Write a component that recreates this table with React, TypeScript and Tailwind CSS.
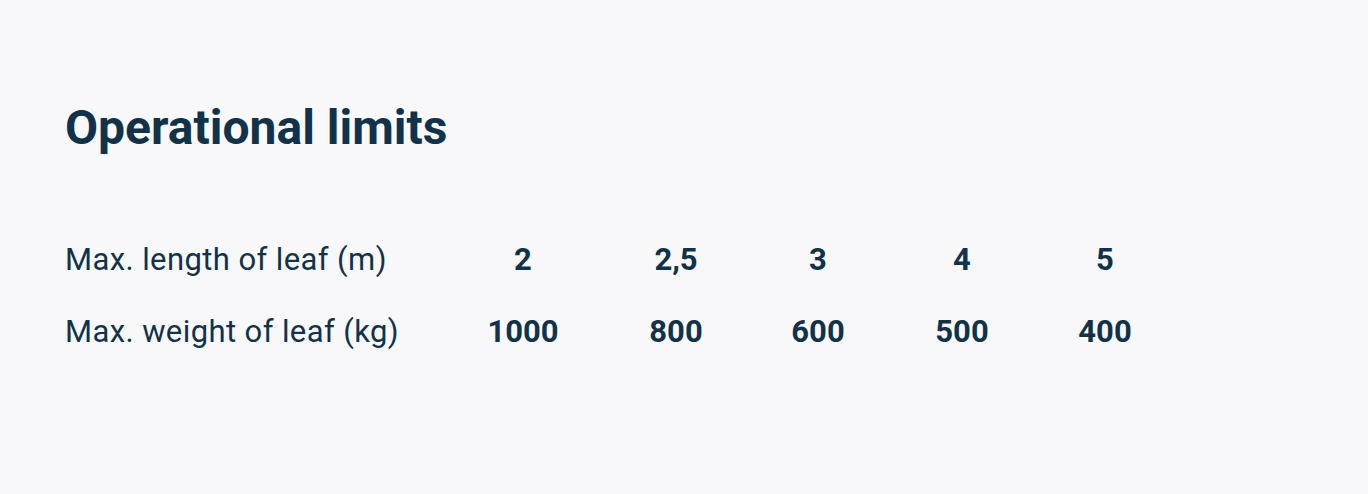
import React from 'react';

const lengths = ['2', '2,5', '3', '4', '5'];
const weights = ['1000', '800', '600', '500', '400'];
const colWidths = ['w-[148px]', 'w-[158px]', 'w-[126px]', 'w-[162px]', 'w-[124px]'];

const Row = ({ label, values }: { label: string; values: string[] }) => (
  <div className="flex items-baseline h-[72px]">
    <div className="w-[384px] text-[31px] tracking-[0.4px]">{label}</div>
    {values.map((v, i) => (
      <div key={v} className={`${colWidths[i]} text-center text-[31px] font-bold`}>
        {v}
      </div>
    ))}
  </div>
);

const App = () => {
  return (
    <div
      className="min-h-[494px] bg-[#f8f8fa] text-[#12324a] px-[65px] pt-[92px]"
      style={{ fontFamily: 'Roboto, "Liberation Sans", sans-serif' }}
    >
      <h2 className="text-[48px] font-bold leading-[72px]">Operational limits</h2>
      <div className="mt-[73px]">
        <Row label="Max. length of leaf (m)" values={lengths} />
        <Row label="Max. weight of leaf (kg)" values={weights} />
      </div>
    </div>
  );
};

export default App;
